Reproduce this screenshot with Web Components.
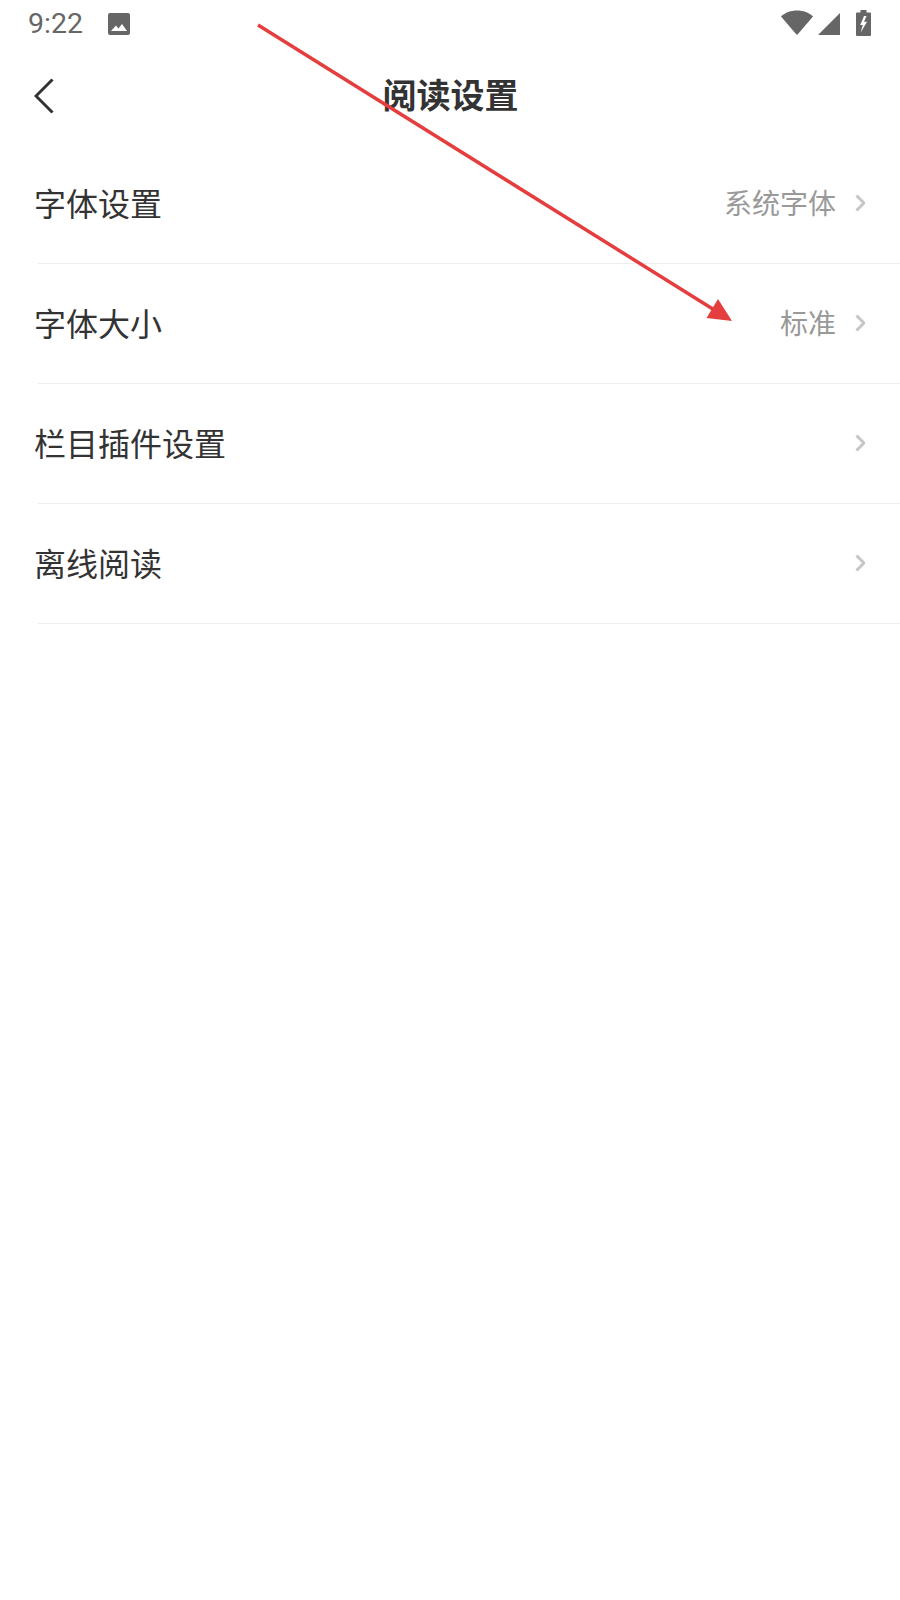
<!DOCTYPE html>
<html lang="zh">
<head>
<meta charset="utf-8">
<title>阅读设置</title>
<style>
  html, body { margin: 0; background: #fff; }
  body { width: 900px; height: 1600px; position: relative; overflow: hidden; font-family: "Noto Sans CJK SC", Roboto, sans-serif; }
</style>
</head>
<body>
<status-bar></status-bar>
<nav-bar title="阅读设置"></nav-bar>
<setting-list>
  <setting-row label="字体设置" value="系统字体"></setting-row>
  <setting-row label="字体大小" value="标准"></setting-row>
  <setting-row label="栏目插件设置"></setting-row>
  <setting-row label="离线阅读"></setting-row>
</setting-list>
<arrow-mark></arrow-mark>

<script>
// status bar
class StatusBar extends HTMLElement {
  constructor() {
    super();
    this.attachShadow({ mode: 'open' });
  }
  connectedCallback() {
    this.shadowRoot.innerHTML = `
      <style>
        :host { display: flex; align-items: center; height: 48px; padding: 0 29px 0 28px; color: #666; }
        .time { font: 400 28.500px/48px Roboto, sans-serif; width: 79px; }
        svg { display: block; fill: #666; }
        .right { margin-left: auto; padding-bottom: 3px; display: flex; align-items: center; }
      </style>
      <span class="time">9:22</span>
      <svg width="24" height="24" viewBox="0 0 24 24"><path fill-rule="evenodd" d="M3 1h18a2 2 0 0 1 2 2v18a2 2 0 0 1-2 2H3a2 2 0 0 1-2-2V3a2 2 0 0 1 2-2zM4 19h16l-5-7-3.600 4.600-2.400-3z"/></svg>
      <div class="right">
        <svg width="32" height="25" viewBox="0 0 32 25"><path d="M0 6.500C4 2.500 10 .5 16 .5s12 2 16 6L17 24a1.400 1.400 0 0 1-2 0z"/></svg>
        <svg style="margin-left:5px;margin-top:3px" width="22" height="22" viewBox="0 0 22 22"><path d="M22 0v22H0z"/></svg>
        <svg style="margin-left:16px" width="15" height="26" viewBox="0 0 15 26"><path fill-rule="evenodd" d="M4.500 0h6v2.500H14a1 1 0 0 1 1 1V25a1 1 0 0 1-1 1H1a1 1 0 0 1-1-1V3.500a1 1 0 0 1 1-1h3.500zM8 6h2.500L8 11.700h3L4.700 22.500 6.800 15H4.200z"/></svg>
      </div>`;
  }
}

// title row with back arrow
class NavBar extends HTMLElement {
  constructor() {
    super();
    this.attachShadow({ mode: 'open' });
  }
  connectedCallback() {
    this.shadowRoot.innerHTML = `
      <style>
        :host { display: flex; align-items: center; justify-content: center; height: 96px; position: relative; }
        svg { position: absolute; left: 34px; top: 30px; fill: none; stroke: #333; stroke-width: 3; }
        h1 { margin: 0 0 4px 1px; font: 700 34px/92px "Noto Sans CJK SC", sans-serif; color: #333; }
      </style>
      <svg width="20" height="36" viewBox="0 0 20 36"><path d="M18.500 1.500 2 18l16.500 16.500"/></svg>
      <h1>${this.getAttribute('title')}</h1>`;
  }
}

class SettingList extends HTMLElement {
  constructor() {
    super();
    this.attachShadow({ mode: 'open' });
  }
  connectedCallback() {
    this.shadowRoot.innerHTML = `
      <style>:host { display: block; }</style>
      <slot></slot>`;
  }
}

class SettingRow extends HTMLElement {
  constructor() {
    super();
    this.attachShadow({ mode: 'open' });
  }
  connectedCallback() {
    const value = this.getAttribute('value') || '';
    this.shadowRoot.innerHTML = `
      <style>
        :host { display: block; padding-left: 38px; }
        .row { display: flex; align-items: center; height: 119px; border-bottom: 1px solid #eee; padding-right: 35px; }
        .label { margin: 0 0 4px -4px; font-size: 32px; color: #333; }
        .value { margin: 0 0 4px auto; font-size: 28px; color: #999; }
        svg { margin: 0 0 2px 19px; fill: none; stroke: #c6c6c6; stroke-width: 3; }
      </style>
      <div class="row">
        <span class="label">${this.getAttribute('label')}</span>
        <span class="value">${value}</span>
        <svg width="10" height="18" viewBox="0 0 10 18"><path d="M1.500 1.500 9 9l-7.500 7.500"/></svg>
      </div>`;
  }
}

// red annotation drawn over the page
class ArrowMark extends HTMLElement {
  constructor() {
    super();
    this.attachShadow({ mode: 'open' });
  }
  connectedCallback() {
    this.shadowRoot.innerHTML = `
      <style>
        :host { position: absolute; left: 0; top: 0; width: 900px; height: 400px; pointer-events: none; }
      </style>
      <svg width="900" height="400" viewBox="0 0 900 400">
        <line x1="258" y1="25" x2="716" y2="311" stroke="#e53e3e" stroke-width="3.500"/>
        <path d="M732 321 706.500 318 718 299z" fill="#e53e3e"/>
      </svg>`;
  }
}

customElements.define('status-bar', StatusBar);
customElements.define('nav-bar', NavBar);
customElements.define('setting-list', SettingList);
customElements.define('setting-row', SettingRow);
customElements.define('arrow-mark', ArrowMark);
</script>
</body>
</html>
